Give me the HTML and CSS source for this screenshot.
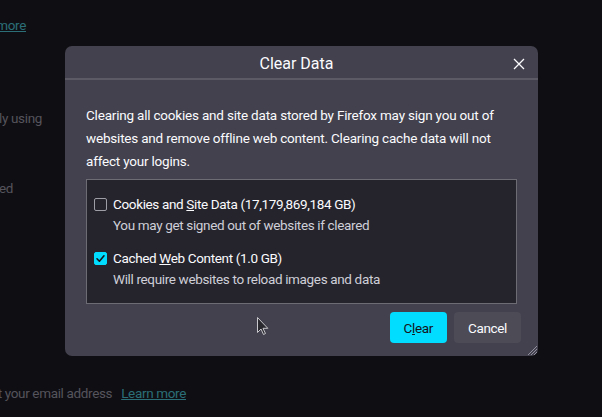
FILE: index.html
```html
<!DOCTYPE html>
<html>
<head>
<meta charset="utf-8">
<link rel="stylesheet" href="styles.css">
</head>
<body>
<div class="page">
  <div class="bgline l1"><a class="bglink">more</a></div>
  <div class="bgline l2">ly using</div>
  <div class="bgline l3">ed</div>
  <div class="bgline l4"><span>t your email address</span><a class="bglink">Learn more</a></div>
</div>

<div class="dialog">
  <div class="dlg-head">
    <span class="dlg-title">Clear Data</span>
    <svg class="close" width="12" height="12" viewBox="0 0 12 12"><path d="M1 1L11 11M11 1L1 11" stroke="#fbfbfe" stroke-width="1.3" fill="none"/></svg>
  </div>
  <div class="dlg-body">
    <p class="desc">Clearing all cookies and site data stored by Firefox may sign you out of websites and remove offline web content. Clearing cache data will not affect your logins.</p>
    <div class="options">
      <div class="opt">
        <div class="opt-row"><span class="cb"></span><span class="lbl">Cookies and <u>S</u>ite Data (17,179,869,184 GB)</span></div>
        <div class="sub">You may get signed out of websites if cleared</div>
      </div>
      <div class="opt">
        <div class="opt-row"><span class="cb checked"><svg width="13" height="13" viewBox="0 0 13 13"><path d="M3 6.8L5.4 9.2L10 3.8" stroke="#15141a" stroke-width="1.6" fill="none" stroke-linecap="round" stroke-linejoin="round"/></svg></span><span class="lbl">Cached <u>W</u>eb Content (1.0 GB)</span></div>
        <div class="sub">Will require websites to reload images and data</div>
      </div>
    </div>
    <div class="buttons">
      <button class="btn primary">C<u>l</u>ear</button>
      <button class="btn">Cancel</button>
    </div>
  </div>
  <svg class="grip" width="10" height="10" viewBox="0 0 10 10"><path d="M10 1L1 10M10 4L4 10M10 7L7 10" stroke="#8f8f9d" stroke-width="1"/></svg>
</div>

<svg class="cursor" width="12" height="19" viewBox="0 0 12 19"><path d="M0.5 0.5L0.5 15.5L4 12L6.5 17.5L8.5 16.5L6 11.3L10.8 11.3Z" fill="#2a2930" stroke="#c8c8cc" stroke-width="1"/></svg>
</body>
</html>
```
FILE: styles.css
```css
html, body {
  margin: 0;
  padding: 0;
  background: #0f0e13;
  width: 602px;
  height: 417px;
  overflow: hidden;
  font-family: "Roboto", "Open Sans", sans-serif;
  letter-spacing: -0.35px;
}

.page {
  display: flex;
  flex-direction: column;
  padding-top: 15px;
  color: #55545c;
  font-size: 13.5px;
}

.bgline {
  display: flex;
  justify-content: flex-end;
  white-space: nowrap;
  line-height: 20px;
}

.bglink {
  color: #2b6e77;
  text-decoration: underline;
}

.l1 { width: 26px; }
.l2 { width: 42px; margin-top: 73px; }
.l3 { width: 13px; margin-top: 50px; }
.l4 { width: 186px; margin-top: 185px; gap: 9px; }

.dialog {
  position: absolute;
  left: 65px;
  top: 46px;
  width: 473px;
  height: 310px;
  background: #42414d;
  border-radius: 7px;
  color: #fbfbfe;
  box-sizing: border-box;
}

.dlg-head {
  height: 34px;
  padding-top: 3px;
  padding-right: 10px;
  border-bottom: 2px solid #5b5a65;
  box-sizing: border-box;
  display: flex;
  align-items: center;
  justify-content: center;
  position: relative;
}

.dlg-title {
  font-size: 16px;
  letter-spacing: 0;
}

.close {
  position: absolute;
  right: 13px;
  top: 12px;
}

.dlg-body {
  padding: 24px 21px 0 21px;
}

.desc {
  margin: 0;
  font-size: 13.5px;
  letter-spacing: -0.2px;
  line-height: 23px;
}

.options {
  margin-top: 6px;
  height: 125px;
  box-sizing: border-box;
  border: 1px solid #6d6c75;
  background: #25242c;
  padding: 14px 7px 0 7px;
  display: flex;
  flex-direction: column;
  gap: 12px;
}

.opt-row {
  display: flex;
  align-items: center;
  gap: 6px;
  font-size: 13.5px;
  line-height: 21px;
}

.cb {
  width: 13px;
  height: 13px;
  box-sizing: border-box;
  border: 1.5px solid #9e9ea6;
  border-radius: 2px;
  display: flex;
}

.cb.checked {
  background: #00ddff;
  border-color: #00ddff;
}

.cb.checked svg {
  margin: -1.5px;
}

.sub {
  padding-left: 19px;
  font-size: 13.5px;
  line-height: 21px;
  color: #cfcfd8;
}

.buttons {
  display: flex;
  justify-content: flex-end;
  gap: 7px;
  margin-top: 8px;
  margin-right: -4px;
}

.btn {
  height: 31px;
  border: none;
  border-radius: 4px;
  font-family: inherit;
  letter-spacing: inherit;
  font-size: 13.5px;
  color: #fbfbfe;
  background: #4c4b56;
  padding: 0 14px;
}

.btn.primary {
  background: #00ddff;
  color: #15141a;
  padding: 0 14px;
}

.grip {
  position: absolute;
  right: 1px;
  bottom: 1px;
}

.cursor {
  position: absolute;
  left: 257px;
  top: 317px;
}
```
